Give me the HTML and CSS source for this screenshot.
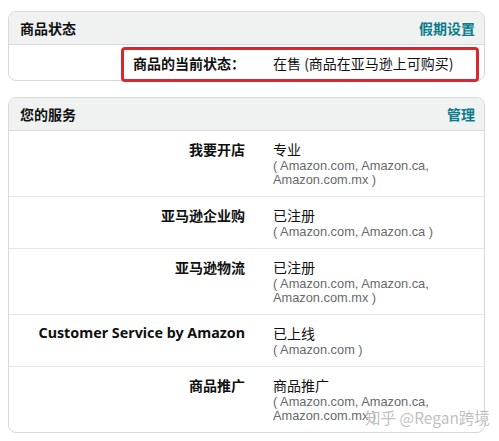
FILE: index.html
```html
<!DOCTYPE html>
<html lang="zh-CN">
<head>
<meta charset="utf-8">
<title>商品状态</title>
<link rel="stylesheet" href="styles.css">
</head>
<body>
<div class="page">
  <section class="card">
    <div class="card-head">
      <span class="title">商品状态</span>
      <a class="link" href="#">假期设置</a>
    </div>
    <div class="row status">
      <div class="label">商品的当前状态：</div>
      <div class="value">在售 (商品在亚马逊上可购买)</div>
    </div>
  </section>

  <section class="card">
    <div class="card-head">
      <span class="title">您的服务</span>
      <a class="link" href="#">管理</a>
    </div>
    <div class="row">
      <div class="label">我要开店</div>
      <div class="value">专业<div class="sub">( Amazon.com, Amazon.ca,<br>Amazon.com.mx )</div></div>
    </div>
    <div class="row">
      <div class="label">亚马逊企业购</div>
      <div class="value">已注册<div class="sub">( Amazon.com, Amazon.ca )</div></div>
    </div>
    <div class="row">
      <div class="label">亚马逊物流</div>
      <div class="value">已注册<div class="sub">( Amazon.com, Amazon.ca,<br>Amazon.com.mx )</div></div>
    </div>
    <div class="row">
      <div class="label latin">Customer Service by Amazon</div>
      <div class="value">已上线<div class="sub">( Amazon.com )</div></div>
    </div>
    <div class="row">
      <div class="label">商品推广</div>
      <div class="value">商品推广<div class="sub">( Amazon.com, Amazon.ca,<br>Amazon.com.mx )</div></div>
    </div>
  </section>
  <div class="watermark">知乎 @Regan跨境</div>
</div>
</body>
</html>
```

FILE: styles.css
```css
* { box-sizing: border-box; }
html, body { margin: 0; padding: 0; background: #ffffff; }
body {
  font-family: "Noto Sans", "Noto Sans CJK SC", sans-serif;
  color: #0f1111;
  font-size: 14px;
}
.page {
  position: relative;
  padding: 11px 14px 0 8px;
  display: flex;
  flex-direction: column;
  gap: 16px;
  height: 441px;
  overflow: hidden;
}
.card {
  border: 1px solid #d5d9d9;
  border-radius: 8px;
  background: #fff;
}
.card-head {
  display: flex;
  justify-content: space-between;
  align-items: center;
  height: 33px;
  padding: 0 9px 1px 11px;
  background: #f0f2f2;
  border-bottom: 1px solid #d5d9d9;
  border-radius: 7px 7px 0 0;
  font-family: "Noto Sans CJK SC", sans-serif;
  font-weight: bold;
  font-size: 14px;
  line-height: 20px;
}
.link {
  color: #0a7b8a;
  text-decoration: none;
}
.row {
  display: grid;
  grid-template-columns: 236px 1fr;
  padding: 8px 0 9px;
  border-bottom: 1px solid #e3e6e6;
  line-height: 20px;
}
.row:last-child { border-bottom: 0; }
.status {
  position: relative;
  padding: 8px 0 7px;
}
.status::after {
  content: "";
  position: absolute;
  left: 112px;
  right: 5px;
  top: 2px;
  bottom: -2px;
  border: 3px solid #d8282c;
  border-radius: 4px;
}
.label {
  text-align: right;
  font-family: "Noto Sans CJK SC", sans-serif;
  font-weight: bold;
  font-size: 14px;
}
.label.latin {
  font-family: "Noto Sans", "Noto Sans CJK SC", sans-serif;
  font-size: 14.3px;
}
.value {
  padding-left: 28px;
  font-family: "Noto Sans CJK SC", sans-serif;
  font-size: 14px;
  color: #111;
}
.sub {
  font-family: "Liberation Sans", Arial, sans-serif;
  font-size: 12.8px;
  line-height: 14px;
  color: #666a6a;
}
.watermark {
  position: absolute;
  left: 365px;
  top: 407px;
  font-family: "Noto Sans CJK SC", sans-serif;
  font-size: 15.5px;
  line-height: 20px;
  color: rgba(170, 170, 170, 0.75);
  text-shadow: 0 0 1px #fff;
  white-space: nowrap;
}
```
